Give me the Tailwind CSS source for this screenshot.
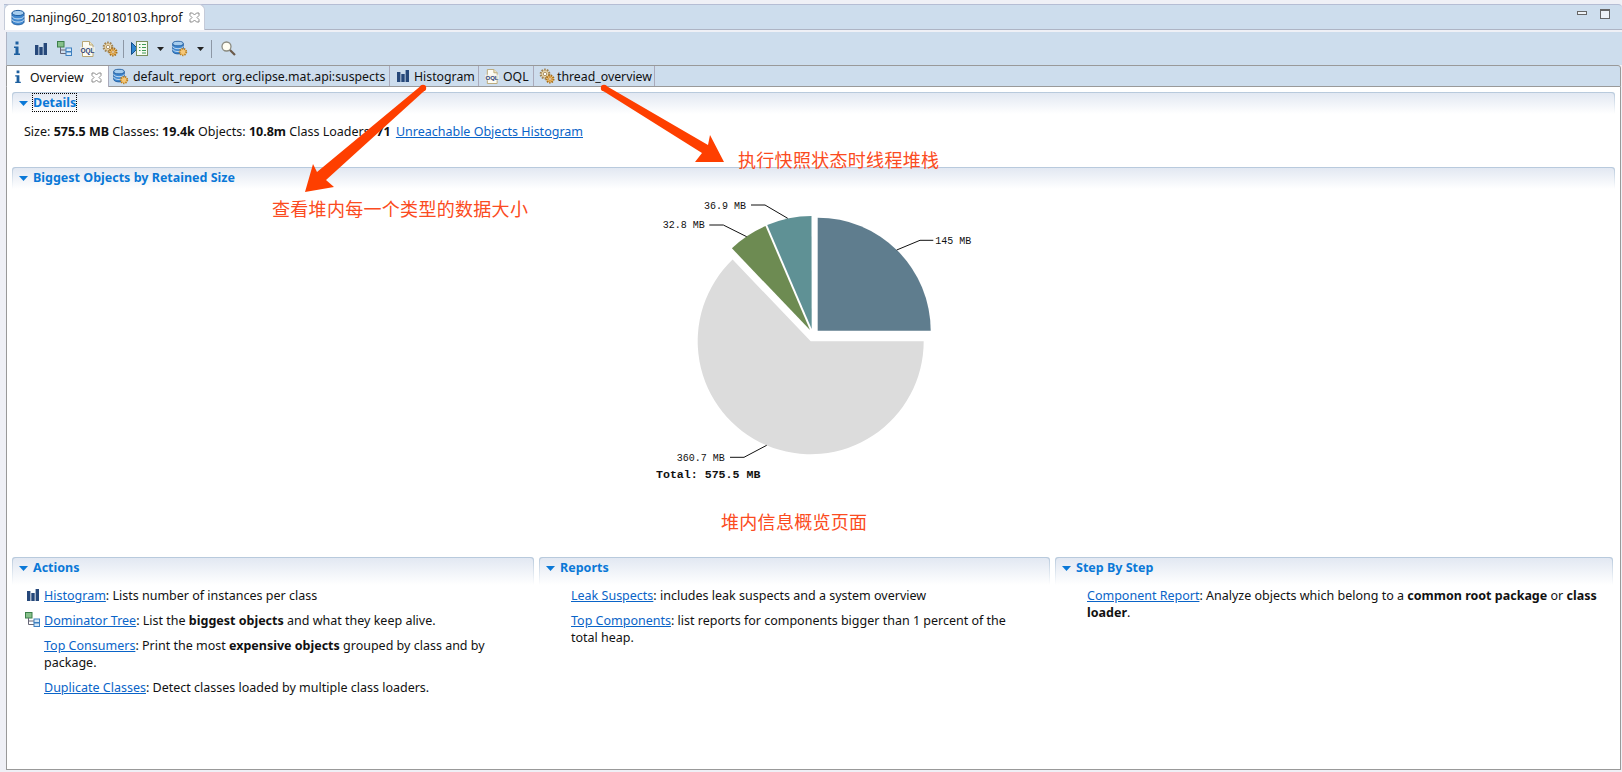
<!DOCTYPE html>
<html lang="zh">
<head>
    <meta charset="UTF-8">
    <meta name="viewport" content="width=device-width, initial-scale=1.0">
    <title>nanjing60_20180103.hprof</title>
    <script src="https://cdn.jsdelivr.net/npm/@tailwindcss/browser@4"></script>
</head>
<body class="bg-[#eff0f6]">
    <svg class="hidden">
        <symbol id="db" viewBox="0 0 16 16">
            <path d="M2 3.500v9c0 1.500 2.700 2.800 6 2.800s6-1.300 6-2.800v-9z" fill="#3f88d0" stroke="#1f5c9f"/>
            <path d="M2 6.600c0 1.500 2.700 2.800 6 2.800s6-1.300 6-2.800M2 9.800c0 1.500 2.700 2.800 6 2.800s6-1.300 6-2.800" fill="none" stroke="#d5e6f6"/>
            <ellipse cx="8" cy="3.500" rx="6" ry="2.600" fill="#a6cdee" stroke="#1f5c9f"/>
        </symbol>
        <symbol id="bars" viewBox="0 0 12 12">
            <path d="M0 2h3.400v10H0zM4.300 4h3.400v8H4.300zM8.600 0h3.400v12H8.600z" fill="#26487a"/>
        </symbol>
        <symbol id="tree" viewBox="0 0 15 15">
            <rect x="0.500" y="0.500" width="6.500" height="5.500" fill="#86c08a" stroke="#3c7f4a"/>
            <path d="M3.500 6v6.500H9M3.500 9H9" fill="none" stroke="#667"/>
            <rect x="9" y="7" width="5.500" height="3.500" fill="#d6e8f7" stroke="#3f80c0"/>
            <rect x="9" y="11" width="5.500" height="3.500" fill="#d6e8f7" stroke="#3f80c0"/>
        </symbol>
        <symbol id="gear" viewBox="0 0 16 16">
            <circle cx="6" cy="6" r="4.300" fill="#ead6ab" stroke="#a08352" stroke-width="2.200" stroke-dasharray="1.600 1.100"/>
            <circle cx="6" cy="6" r="1.700" fill="#fff" stroke="#8f7445" stroke-width="0.700"/>
            <circle cx="11" cy="11" r="3.500" fill="#f2bd68" stroke="#a9701a" stroke-width="2" stroke-dasharray="1.400 1"/>
            <circle cx="11" cy="11" r="1.300" fill="#fff" stroke="#a9701a" stroke-width="0.700"/>
        </symbol>
        <symbol id="oql" viewBox="0 0 15 16">
            <path d="M2.500 0.500h7l3.500 3.500v11.500h-10.500z" fill="#fdfcf4" stroke="#b9a776"/>
            <path d="M9.500 0.500v3.500h3.500" fill="#efe6c4" stroke="#b9a776"/>
            <rect x="0" y="6" width="15" height="6" fill="#f6f4ea" fill-opacity="0.700"/>
            <text x="7.500" y="11.500" text-anchor="middle" class="font-['Liberation_Sans',sans-serif] text-[6.500px] font-bold" fill="#2b3f78">OQL</text>
        </symbol>
        <symbol id="close" viewBox="0 0 11 11">
            <path d="M1 1h2.500l2 2 2-2H10v2.500l-2 2 2 2V10H7.500l-2-2-2 2H1V7.500l2-2-2-2z" fill="#fff" stroke="#8b8b8b"/>
        </symbol>
        <symbol id="info" viewBox="0 0 8 15">
            <path d="M2.500 0.500h3v3h-3zM1 5.500h4.500v7H7V14H1v-1.500h1.500v-5.500H1z" fill="#1d5f9f"/>
        </symbol>
        <symbol id="twisty" viewBox="0 0 9 5">
            <path d="M0 0h9L4.500 5z" fill="#0a78d7"/>
        </symbol>
    </svg>

    <div class="relative h-[772px] w-[1622px] overflow-hidden flex flex-col text-[12.5px] leading-[17px] text-[#111] font-['Noto_Sans',sans-serif]">
        <!-- editor tab bar -->
        <div class="mt-1 ml-1 h-[26px] flex bg-[#cddded] border-t border-b border-t-[#b5bdd4] border-b-[#aeb4c4] rounded-tr-[4px] shrink-0">
            <div class="w-[201px] h-[26px] -mt-px bg-white rounded-t-[6px] border border-b-0 border-[#c5cbd9] flex items-center pl-[5px]">
                <svg class="w-4 h-[17px]"><use href="#db"/></svg>
                <span class="ml-[2px] text-[12.300px]">nanjing60_20180103.hprof</span>
                <svg class="w-[11px] h-[11px] ml-[7px]"><use href="#close"/></svg>
            </div>
            <div class="flex-1 flex justify-end items-start pt-[4px] pr-[12px] gap-[13px]">
                <div class="w-[10px] h-[4px] mt-[2px] border border-[#666] bg-[#eef2f7]"></div>
                <div class="w-[10px] h-[10px] border border-[#666] border-t-2 bg-[#eef2f7]"></div>
            </div>
        </div>

        <!-- toolbar -->
        <div class="mt-[2px] ml-[6px] h-[33px] bg-[#cddded] border-l border-[#aeb4c4] flex items-center shrink-0 pl-[6px]">
            <svg class="w-2 h-[15px]"><use href="#info"/></svg>
            <svg class="w-3 h-3 ml-[14px]"><use href="#bars"/></svg>
            <svg class="w-[15px] h-[15px] ml-[10px]"><use href="#tree"/></svg>
            <svg class="w-[15px] h-4 ml-[8px]"><use href="#oql"/></svg>
            <svg class="w-4 h-4 ml-[7px]"><use href="#gear"/></svg>
            <div class="w-px h-[18px] bg-[#8d97a5] ml-[5px]"></div>
            <svg class="w-[17px] h-[15px] ml-[7px]" viewBox="0 0 17 15">
                <path d="M0.500 1.500l6 6-6 6z" fill="#2f86d0" stroke="#14508c"/>
                <rect x="5.500" y="0.500" width="11" height="14" fill="#f7fbf3" stroke="#7a8f5e"/>
                <path d="M8 3.500h1.500M8 6.500h1.500M8 9.500h1.500M11 3.500h4M11 6.500h4M11 9.500h4M11 12h4" stroke="#3f9a55"/>
            </svg>
            <svg class="w-[7px] h-1 ml-[9px]" viewBox="0 0 7 4"><path d="M0 0h7L3.500 4z" fill="#222"/></svg>
            <div class="relative w-[17px] h-[17px] ml-[7px]">
                <svg class="w-[14px] h-[15px]"><use href="#db"/></svg>
                <svg class="absolute right-0 bottom-0 w-[10px] h-[10px]" viewBox="6 6 10 10"><circle cx="11" cy="11" r="3.300" fill="#f6c777" stroke="#b97f22" stroke-width="1.800" stroke-dasharray="1.300 1"/></svg>
            </div>
            <svg class="w-[7px] h-1 ml-[9px]" viewBox="0 0 7 4"><path d="M0 0h7L3.500 4z" fill="#222"/></svg>
            <div class="w-px h-[18px] bg-[#8d97a5] ml-[7px]"></div>
            <svg class="w-[15px] h-[15px] ml-[9px]" viewBox="0 0 15 15">
                <circle cx="5.500" cy="5.500" r="4.500" fill="#fffdf2" stroke="#8b8b80" stroke-width="1.300"/>
                <path d="M9 9l5 5" stroke="#6b5a4a" stroke-width="2.200"/>
            </svg>
        </div>

        <!-- view tabs -->
        <div class="ml-[6px] mr-[1px] h-[22px] bg-[#cddded] border-t border-b border-l border-r border-[#999] rounded-tr-[3px] flex shrink-0 text-[12.300px]">
            <div class="w-[102px] h-[22px] bg-white border-r border-[#aab] flex items-center pl-[7px]">
                <svg class="w-2 h-[14px]"><use href="#info"/></svg>
                <span class="ml-[8px]">Overview</span>
                <svg class="w-[11px] h-[11px] ml-[7px]"><use href="#close"/></svg>
            </div>
            <div class="w-[281px] border-r border-[#aab] flex items-center pl-[3px]">
                <div class="relative w-[17px] h-[17px]">
                    <svg class="w-[14px] h-[15px]"><use href="#db"/></svg>
                    <svg class="absolute right-0 bottom-0 w-[10px] h-[10px]" viewBox="6 6 10 10"><circle cx="11" cy="11" r="3.300" fill="#f6c777" stroke="#b97f22" stroke-width="1.800" stroke-dasharray="1.300 1"/></svg>
                </div>
                <span class="ml-[4px] whitespace-pre">default_report  org.eclipse.mat.api:suspects</span>
            </div>
            <div class="w-[89px] border-r border-[#aab] flex items-center pl-[7px]">
                <svg class="w-3 h-3"><use href="#bars"/></svg>
                <span class="ml-[5px]">Histogram</span>
            </div>
            <div class="w-[55px] border-r border-[#aab] flex items-center pl-[6px]">
                <svg class="w-[14px] h-[15px]"><use href="#oql"/></svg>
                <span class="ml-[4px]">OQL</span>
            </div>
            <div class="w-[121px] border-r border-[#aab] flex items-center pl-[5px]">
                <svg class="w-4 h-4"><use href="#gear"/></svg>
                <span class="ml-[2px]">thread_overview</span>
            </div>
        </div>

        <!-- overview page -->
        <div class="flex-1 ml-[6px] mr-[1px] mb-[2px] bg-white border-l border-r border-b border-[#999] pt-[5px] pl-[5px] pr-[5px] flex flex-col">
            <div class="pt-px px-px rounded-t-[3px] bg-linear-to-b from-[#b7c9dc] to-white">
                <div class="h-[21px] rounded-t-[3px] bg-linear-to-b from-[#e2e8f2] to-white flex items-start pt-px pl-[6px] font-bold text-[#0a78d7]">
                    <svg class="w-[9px] h-[5px] mt-[7px]"><use href="#twisty"/></svg>
                    <span class="ml-[5px] outline-1 outline-dotted outline-black">Details</span>
                </div>
            </div>
            <div class="pt-[9px] pl-3 h-[53px]">
                Size: <b>575.5 MB</b> Classes: <b>19.4k</b> Objects: <b>10.8m</b> Class Loaders: <b>71</b>
                <a class="ml-[2px] text-[#0a64c8] underline">Unreachable Objects Histogram</a>
            </div>

            <div class="pt-px px-px rounded-t-[3px] bg-linear-to-b from-[#b7c9dc] to-white">
                <div class="h-[21px] rounded-t-[3px] bg-linear-to-b from-[#e2e8f2] to-white flex items-start pt-px pl-[6px] font-bold text-[#0a78d7]">
                    <svg class="w-[9px] h-[5px] mt-[7px]"><use href="#twisty"/></svg>
                    <span class="ml-[5px]">Biggest Objects by Retained Size</span>
                </div>
            </div>

            <svg class="w-[1602px] h-[368px] shrink-0" viewBox="12 189 1602 368">
                <path d="M817.700 217.700A113 113 0 0 1 930.700 330.700H817.700z" fill="#5f7d8e"/>
                <path d="M811.700 329L767.200 225.100A113 113 0 0 1 811.500 216z" fill="#5f9195"/>
                <path d="M810 330L731.900 248.300A113 113 0 0 1 765.500 226.100z" fill="#6d8b52"/>
                <path d="M810.700 341.300H923.700A113 113 0 1 1 732.600 259.600z" fill="#dcdcdc"/>
                <g fill="none" stroke="#111">
                    <path d="M896.700 250L920 240.300H933.300"/>
                    <path d="M751 205H765L787.700 218.300"/>
                    <path d="M709.300 225H723.300L746.700 236.700"/>
                    <path d="M730 457.300H744L766.700 445.300"/>
                </g>
                <g class="font-['Liberation_Mono',monospace] text-[10px]" fill="#111">
                    <text x="935.300" y="243.500">145 MB</text>
                    <text x="704" y="208.500">36.9 MB</text>
                    <text x="662.700" y="228">32.8 MB</text>
                    <text x="676.700" y="461">360.7 MB</text>
                    <text x="656" y="477.500" class="font-bold text-[11.600px]">Total: 575.5 MB</text>
                </g>
            </svg>

            <div class="grid grid-cols-[522px_511px_558px] gap-x-[5px]">
                <section>
                    <div class="pt-px px-px rounded-t-[3px] bg-linear-to-b from-[#b7c9dc] to-white">
                        <div class="h-[27px] rounded-t-[3px] bg-linear-to-b from-[#e2e8f2] to-white flex items-start pt-px pl-[6px] font-bold text-[#0a78d7]">
                            <svg class="w-[9px] h-[5px] mt-[7px]"><use href="#twisty"/></svg>
                            <span class="ml-[5px]">Actions</span>
                        </div>
                    </div>
                    <div class="pl-[32px] pr-4 pt-[2px] flex flex-col gap-2">
                        <p class="relative">
                            <svg class="absolute left-[-17px] top-[2px] w-3 h-3"><use href="#bars"/></svg>
                            <a class="text-[#0a64c8] underline">Histogram</a>: Lists number of instances per class
                        </p>
                        <p class="relative">
                            <svg class="absolute left-[-19px] top-[0px] w-[15px] h-[15px]"><use href="#tree"/></svg>
                            <a class="text-[#0a64c8] underline">Dominator Tree</a>: List the <b>biggest objects</b> and what they keep alive.
                        </p>
                        <p><a class="text-[#0a64c8] underline">Top Consumers</a>: Print the most <b>expensive objects</b> grouped by class and by package.</p>
                        <p><a class="text-[#0a64c8] underline">Duplicate Classes</a>: Detect classes loaded by multiple class loaders.</p>
                    </div>
                </section>
                <section>
                    <div class="pt-px px-px rounded-t-[3px] bg-linear-to-b from-[#b7c9dc] to-white">
                        <div class="h-[27px] rounded-t-[3px] bg-linear-to-b from-[#e2e8f2] to-white flex items-start pt-px pl-[6px] font-bold text-[#0a78d7]">
                            <svg class="w-[9px] h-[5px] mt-[7px]"><use href="#twisty"/></svg>
                            <span class="ml-[5px]">Reports</span>
                        </div>
                    </div>
                    <div class="pl-[32px] pr-[24px] pt-[2px] flex flex-col gap-2">
                        <p><a class="text-[#0a64c8] underline">Leak Suspects</a>: includes leak suspects and a system overview</p>
                        <p><a class="text-[#0a64c8] underline">Top Components</a>: list reports for components bigger than 1 percent of the total heap.</p>
                    </div>
                </section>
                <section>
                    <div class="pt-px px-px rounded-t-[3px] bg-linear-to-b from-[#b7c9dc] to-white">
                        <div class="h-[27px] rounded-t-[3px] bg-linear-to-b from-[#e2e8f2] to-white flex items-start pt-px pl-[6px] font-bold text-[#0a78d7]">
                            <svg class="w-[9px] h-[5px] mt-[7px]"><use href="#twisty"/></svg>
                            <span class="ml-[5px]">Step By Step</span>
                        </div>
                    </div>
                    <div class="pl-[32px] pr-4 pt-[2px]">
                        <p><a class="text-[#0a64c8] underline">Component Report</a>: Analyze objects which belong to a <b>common root package</b> or <b>class loader</b>.</p>
                    </div>
                </section>
            </div>
        </div>

        <!-- annotations drawn on top of the screenshot -->
        <svg class="absolute inset-0 w-[1622px] h-[772px] pointer-events-none" viewBox="0 0 1622 772">
            <g fill="#fe3f00">
                <circle cx="423" cy="88" r="3.200"/>
                <path d="M421 85.700L425 90.300L326 180L334 187L305 192L313 164L317 172z"/>
                <circle cx="604" cy="88" r="3.200"/>
                <path d="M605.600 85.400L708 145L710 135L724 162L695 162L702 153L602.400 90.600z"/>
            </g>
        </svg>
        <span class="absolute left-[272px] top-[196px] text-[18px] leading-6 tracking-[0.3px] text-[#fb4b21] font-['Noto_Sans_CJK_SC',sans-serif]">查看堆内每一个类型的数据大小</span>
        <span class="absolute left-[738px] top-[147px] text-[18px] leading-6 tracking-[0.3px] text-[#fb4b21] font-['Noto_Sans_CJK_SC',sans-serif]">执行快照状态时线程堆栈</span>
        <span class="absolute left-[721px] top-[509px] text-[18px] leading-6 tracking-[0.3px] text-[#fb4b21] font-['Noto_Sans_CJK_SC',sans-serif]">堆内信息概览页面</span>
    </div>
</body>
</html>
